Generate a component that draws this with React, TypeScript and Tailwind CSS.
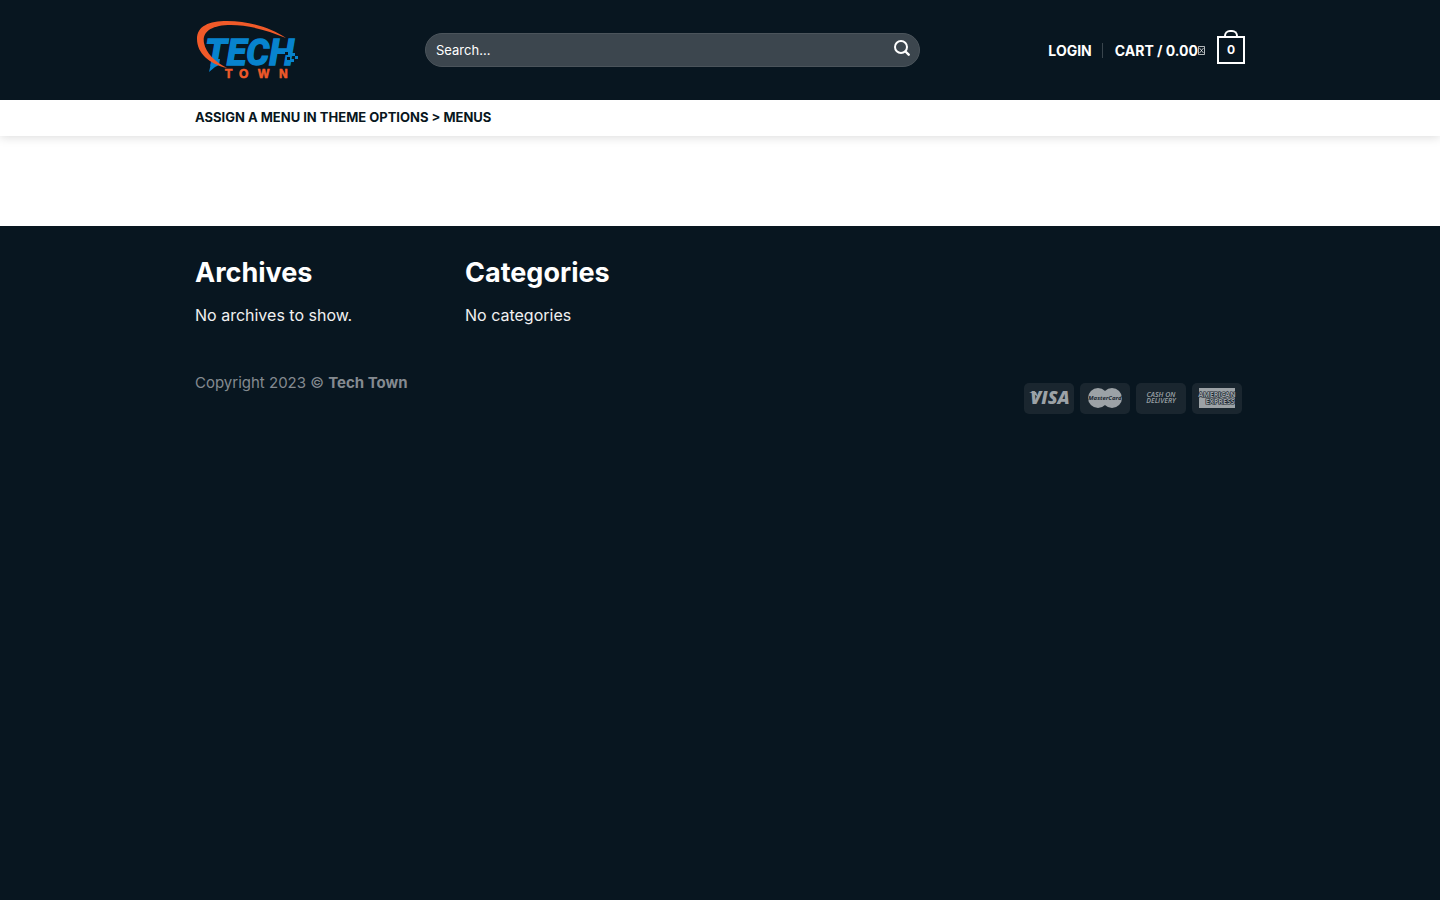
import { useState } from "react";
import type { ReactNode } from "react";

function Logo() {
  return (
    <a href="#home" aria-label="Tech Town" className="block w-[200px] shrink-0">
      <svg width="106" height="62" viewBox="0 0 106 62" fontFamily="Roboto, sans-serif">
        <text
          x="10"
          y="46"
          fontSize="36"
          fontWeight="700"
          fontStyle="italic"
          fill="#0783ce"
          stroke="#0783ce"
          strokeWidth="1.5"
        >
          TECH
        </text>
        <path d="M17 40h8l-1 6-4 2-6 5z" fill="#0783ce" />
        <path
          d="M32 49C14 45 2 34 2 20C2 7 14 2 32 2C55 2 76 9 91 19C72 11 53 6 36 6C16 6 7 13 9 24C11 34 20 43 32 49z"
          fill="#f15a29"
        />
        <path d="M90 33h3v3h-3zM92 38h3v3h-3z" fill="#081620" />
        <path d="M96 34h4v3h-4zM100 37h3v3h-3zM95 40h4v3h-4z" fill="#0783ce" />
        <text
          x="30 44 63 84"
          y="59"
          fontSize="12"
          fontWeight="700"
          fill="#f15a29"
          stroke="#f15a29"
          strokeWidth="0.6"
          fontFamily="'Liberation Sans', sans-serif"
        >
          TOWN
        </text>
      </svg>
    </a>
  );
}

function Search() {
  const [query, setQuery] = useState("");
  return (
    <form
      role="search"
      onSubmit={(event) => event.preventDefault()}
      className="ml-[30px] flex h-[34px] w-[495px] items-center rounded-full border border-[#4b545b] bg-[#3c464e] text-white"
    >
      <input
        type="search"
        aria-label="Search"
        placeholder="Search…"
        value={query}
        onChange={(event) => setQuery(event.target.value)}
        className="h-full min-w-0 flex-1 bg-transparent pl-[10px] text-[13px] text-white outline-none placeholder:text-white"
      />
      <button type="submit" aria-label="Submit search" className="flex h-full w-[34px] items-center justify-center pb-1">
        <svg width="16" height="16" viewBox="0 0 16 16" fill="none" stroke="currentColor" strokeLinecap="round">
          <circle cx="7" cy="7" r="6" strokeWidth="2" />
          <path d="M11.5 11.5L14.7 14.7" strokeWidth="2.4" />
        </svg>
      </button>
    </form>
  );
}

function CartIcon() {
  return (
    <span className="relative flex size-7 items-center justify-center border-2 border-white text-xs">
      <span className="absolute -top-2 left-[5px] h-[6px] w-[14px] rounded-t-full border-2 border-b-0 border-white" />
      0
    </span>
  );
}

function Badge({ label, children }: { label: string; children: ReactNode }) {
  return (
    <li className="h-[31px] w-[50px] overflow-hidden rounded-[5px] bg-[#1a262f]">
      <svg
        role="img"
        aria-label={label}
        width="50"
        height="31"
        viewBox="0 0 50 31"
        fill="#9ca2a6"
        fontFamily="'Open Sans', sans-serif"
        fontWeight="700"
        fontStyle="italic"
        textAnchor="middle"
      >
        {children}
      </svg>
    </li>
  );
}

function Payments() {
  return (
    <ul className="mt-[10px] mr-[3px] flex gap-[6px]">
      <Badge label="Visa">
        <text x="26" y="21" fontSize="18" fontWeight="800">VISA</text>
        <path d="M5 9h7l2 5-4-3z" />
      </Badge>
      <Badge label="MasterCard">
        <circle cx="18" cy="15" r="10" />
        <circle cx="32" cy="15" r="10" />
        <text x="25" y="17" fontSize="6" fill="#1a262f">MasterCard</text>
      </Badge>
      <Badge label="Cash on delivery">
        <text x="25" y="14" fontSize="7" fontWeight="600">CASH ON</text>
        <text x="25" y="20" fontSize="7" fontWeight="600">DELIVERY</text>
      </Badge>
      <Badge label="American Express">
        <path d="M7 5h36v20H7z" />
        <g fill="#9ca2a6" stroke="#1a262f" strokeWidth="1.2" paintOrder="stroke" fontSize="7" fontStyle="normal">
          <text x="25" y="14">AMERICAN</text>
          <text x="28" y="21">EXPRESS</text>
        </g>
      </Badge>
    </ul>
  );
}

export default function App() {
  return (
    <div className="flex min-h-screen flex-col bg-[#081620] font-['Inter',sans-serif] text-white">
      <header className="relative shadow-[0_1px_10px_rgba(0,0,0,0.15)]">
        <div className="bg-[#081620]">
          <div className="mx-auto flex h-[100px] max-w-[1080px] items-center px-[15px]">
            <Logo />
            <Search />
            <nav aria-label="Account" className="ml-auto flex items-center text-[14px] font-bold">
              <a href="#login">LOGIN</a>
              <span className="mr-3 ml-[10px] h-[15px] w-px bg-[#39454d]" />
              <a href="#cart" className="flex items-center gap-3 whitespace-nowrap">
                <span className="flex items-center">
                  CART / 0.00
                  <svg width="7" height="9" viewBox="0 0 7 9" fill="none" stroke="currentColor" strokeWidth="0.7" aria-hidden="true">
                    <path d="M.5.5h6v8h-6zM1.5 2l4 5M5.5 2l-4 5" />
                  </svg>
                </span>
                <CartIcon />
              </a>
            </nav>
          </div>
        </div>
        <nav aria-label="Main" className="bg-white">
          <div className="mx-auto flex h-9 max-w-[1080px] items-center px-[15px] text-[13px] font-bold text-[#081620]">
            <a href="#menus">ASSIGN A MENU IN THEME OPTIONS &gt; MENUS</a>
          </div>
        </nav>
      </header>
      <main className="h-[90px] bg-white" />
      <footer className="mx-auto w-full max-w-[1080px] px-[15px] pt-[30px]">
        <div className="grid grid-cols-4 gap-x-[30px]">
          <section>
            <h2 className="text-[27px] leading-[34px] font-bold">Archives</h2>
            <p className="mt-3 text-base leading-[26px] text-[#f1f1f1]">No archives to show.</p>
          </section>
          <section>
            <h2 className="text-[27px] leading-[34px] font-bold">Categories</h2>
            <p className="mt-3 text-base leading-[26px] text-[#f1f1f1]">No categories</p>
          </section>
        </div>
        <div className="mt-[45px] flex items-start justify-between">
          <p className="text-[15px] leading-5 text-[#848a90]">
            Copyright 2023 © <strong>Tech Town</strong>
          </p>
          <Payments />
        </div>
      </footer>
    </div>
  );
}
